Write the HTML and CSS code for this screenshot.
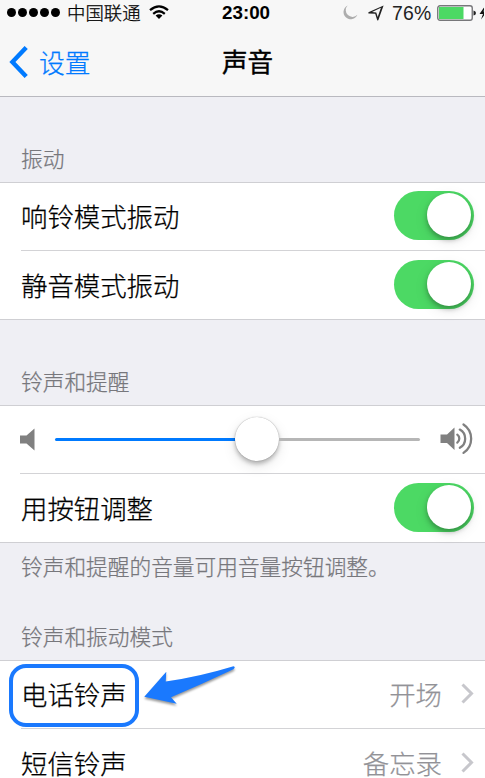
FILE: index.html
```html
<!DOCTYPE html>
<html lang="zh-CN">
<head>
<meta charset="utf-8">
<title>声音</title>
<link rel="stylesheet" href="styles.css">
</head>
<body>
<header class="top">
  <div class="status">
    <div class="status-left">
      <span class="signal"><i></i><i></i><i></i><i></i><i></i></span>
      <span class="carrier">中国联通</span>
      <svg class="wifi" width="20" height="15" viewBox="0 0 20 15" fill="none" stroke="#000" stroke-width="2.2"><path d="M1 5.2Q10-2.6 19 5.2M4.2 8.8Q10 3.7 15.8 8.8"/><path d="M6.6 10.6Q10 7.8 13.4 10.6L10 14Z" fill="#000" stroke="none"/></svg>
    </div>
    <span class="time">23:00</span>
    <div class="status-right">
      <svg class="moon" width="15" height="15" viewBox="0 0 15 15"><path d="M4.6 .6A7.2 7.2 0 1 0 14.4 9.8A6.6 6.6 0 0 1 4.6 .6Z" fill="#adadad"/></svg>
      <svg class="location" width="16" height="16" viewBox="0 0 16 16"><path d="M15.6 .4L.4 7.2L.4 8.4L7.2 8.7L9.3 15.6L10.3 15.2ZM12.9 2.8L9.7 12.1L8.3 7.5L4.1 7Z" fill="#222" fill-rule="evenodd"/></svg>
      <span class="percent">76%</span>
      <svg class="battery" width="47" height="16" viewBox="0 0 47 16"><rect x=".75" y=".75" width="34.5" height="14.5" rx="2.2" fill="#fff" stroke="#77777a" stroke-width="1.4"/><rect x="2" y="2" width="24.5" height="12" fill="#4cd964"/><path d="M36.5 5.5Q39 6 39 8T36.5 10.5Z" fill="#222"/><path d="M48 1L42.5 9H46L44 14.5L50 6.5H46.5Z" fill="#111"/></svg>
    </div>
  </div>
  <nav class="nav">
    <a class="back"><svg width="19" height="32" viewBox="0 0 19 32" fill="none" stroke="#007aff" stroke-width="4.4"><path d="M17.2 1.5L3.4 16L17.2 30.5"/></svg><span>设置</span></a>
    <h1>声音</h1>
  </nav>
</header>
<main>
  <h2 class="caption">振动</h2>
  <section class="group">
    <div class="row"><span>响铃模式振动</span><span class="switch"></span></div>
    <div class="row"><span>静音模式振动</span><span class="switch"></span></div>
  </section>
  <h2 class="caption caption-second">铃声和提醒</h2>
  <section class="group">
    <div class="row slider-row">
      <svg class="quiet" width="15" height="23" viewBox="0 0 15 23"><path d="M0 7.5H6.5L14.5 .5V22.5L6.5 15.5H0Z" fill="#808080"/></svg>
      <div class="slider"><span class="fill"></span><span class="thumb"></span><span class="rest"></span></div>
      <svg class="loud" width="35" height="33" viewBox="0 0 35 33"><path d="M1.5 12.5H8L15.5 5.5V28L8 21H1.5Z" fill="#808080"/><g fill="none" stroke="#808080" stroke-width="2.3" stroke-linecap="round"><path d="M18.3 12.6A5 5 0 0 1 18.3 20.6"/><path d="M20.8 7.6A10.4 10.4 0 0 1 20.8 25.8"/><path d="M24.5 2.5A17 17 0 0 1 24.5 30.9"/></g></svg>
    </div>
    <div class="row"><span>用按钮调整</span><span class="switch"></span></div>
  </section>
  <p class="note">铃声和提醒的音量可用音量按钮调整。</p>
  <h2 class="caption caption-third">铃声和振动模式</h2>
  <section class="group sounds">
    <div class="row"><span>电话铃声</span><span class="value">开场<svg width="13" height="21" viewBox="0 0 13 21" fill="none" stroke="#c7c7cc" stroke-width="3"><path d="M1.5 1.5L10.5 10.5L1.5 19.5"/></svg></span>
      <span class="highlight"></span>
      <svg class="arrow" width="96" height="46" viewBox="0 0 96 46"><path d="M2.3 33.7L24.3 8.7L23.7 18.5Q58 13.5 91.5 3.2Q94 4 91.5 6.2Q60 21 29 34.3L34.7 40.8Z" fill="#1a79fe"/></svg>
    </div>
    <div class="row"><span>短信铃声</span><span class="value">备忘录<svg width="13" height="21" viewBox="0 0 13 21" fill="none" stroke="#c7c7cc" stroke-width="3"><path d="M1.5 1.5L10.5 10.5L1.5 19.5"/></svg></span></div>
  </section>
</main>
</body>
</html>
```
FILE: styles.css
```css
* { box-sizing: border-box; }
html { height: 778px; overflow: hidden; }
body {
  margin: 0;
  width: 485px;
  height: 778px;
  overflow: hidden;
  background: #efeff4;
  color: #000;
  font-family: "Noto Sans CJK SC", sans-serif;
  font-weight: 300;
  -webkit-text-stroke: .25px currentColor;
}
h1, h2, p { margin: 0; font-weight: 300; }
svg { display: block; flex: none; }
.top { height: 97px; background: #f7f7f7; border-bottom: 1px solid #b9b9bf; }
.status { display: grid; grid-template-columns: 222px 48px 1fr; height: 24px; align-items: center; overflow: hidden; }
.status-left { display: flex; align-items: center; padding-left: 7px; }
.signal { display: flex; gap: 2px; }
.signal i { width: 9px; height: 9px; border-radius: 50%; background: #000; }
.carrier { font-size: 18.4px; line-height: 24px; margin-left: 7px; padding-bottom: 1px; }
.wifi { margin-left: 8px; }
.time { font: bold 18.8px/24px "Liberation Sans", sans-serif; -webkit-text-stroke: 0; }
.status-right { display: flex; align-items: center; padding-left: 73px; }
.location { margin-left: 10px; }
.percent { font: 19.4px/24px "Liberation Sans", sans-serif; color: #222; margin-left: 8px; letter-spacing: .2px; -webkit-text-stroke: 0; }
.battery { margin-left: 6px; }
.nav { display: grid; grid-template-columns: 222px 1fr; height: 72px; align-items: center; padding-top: 4px; }
.back { display: flex; align-items: center; gap: 11px; padding-left: 9px; color: #007aff; font-size: 25.8px; line-height: 36px; }
h1 { font-size: 25.6px; line-height: 36px; font-weight: 400; padding-bottom: 2px; -webkit-text-stroke: .4px #000; }
.caption, .note { color: #77777c; font-size: 21.7px; line-height: 30px; padding-left: 21px; }
.caption { height: 85px; padding-top: 46px; }
.caption-second { padding-top: 46px; }
.note { height: 49px; padding-top: 8px; }
.caption-third { height: 68px; padding-top: 29px; }
.group { background: #fff; border: solid #cfcfd3; border-width: 1px 0; }
.row {
  position: relative;
  display: flex;
  align-items: center;
  justify-content: space-between;
  height: 68px;
  margin-left: 21px;
  padding: 0 11px 2px 0;
  font-size: 26.4px;
  line-height: 36px;
}
.row:first-child { border-bottom: 1px solid #d3d3d6; }
.row:last-child { padding-bottom: 1px; }
.switch { width: 80px; height: 49px; padding: 2px 3px; border-radius: 25px; background: #4cd964; display: flex; justify-content: flex-end; }
.switch::after { content: ""; width: 44px; height: 44px; border-radius: 50%; background: #fff; box-shadow: 0 3px 5px rgba(0,0,0,.28), 0 4px 14px rgba(0,0,0,.1); }
.slider { display: flex; align-items: center; width: 365px; height: 44px; }
.fill { width: 180px; height: 3px; margin-top: 2px; border-radius: 2px 0 0 2px; background: #007aff; }
.thumb { width: 44px; height: 44px; border-radius: 50%; background: #fff; box-shadow: 0 0 1px rgba(0,0,0,.4), 0 3px 4px rgba(0,0,0,.25), 0 5px 14px rgba(0,0,0,.1); }
.rest { flex: 1; height: 3px; margin-top: 2px; border-radius: 0 2px 2px 0; background: #b6b6b6; }
.slider-row { margin-left: 20px; padding: 0 11px 2px 0; }
.quiet { margin-top: 2px; }
.value { display: flex; align-items: center; gap: 19px; color: #929297; }
.highlight { position: absolute; left: -12px; top: 3px; width: 130px; height: 63px; border: 4px solid #1a79fe; border-radius: 17px; }
.arrow { position: absolute; left: 121px; top: 2px; filter: drop-shadow(0 2px 1px rgba(0,0,0,.4)); }
```
